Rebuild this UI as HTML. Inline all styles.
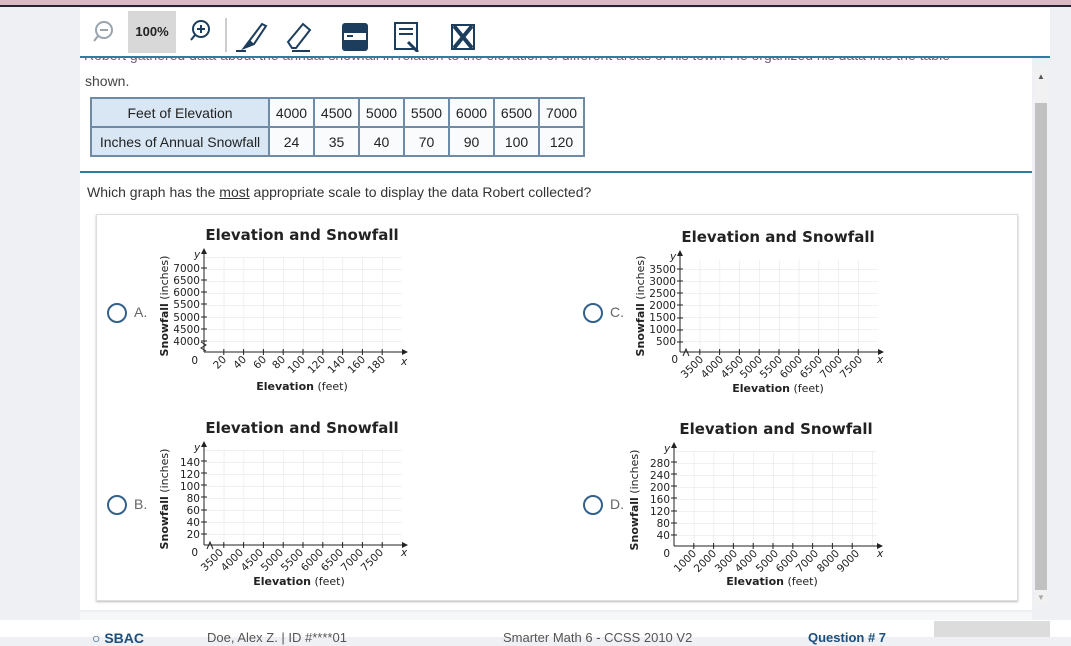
<!DOCTYPE html>
<html><head><meta charset="utf-8"><style>
body{margin:0;width:1071px;height:637px;overflow:hidden;background:#eef0f3;font-family:"Liberation Sans",sans-serif;position:relative}
.abs{position:absolute}
.tb{left:80px;top:8px;width:970px;height:48px;background:#fff}
.panel{left:80px;top:58px;width:952px;height:552px;background:#fff}
svg text{font-family:"DejaVu Sans","Liberation Sans",sans-serif}
table{border-collapse:collapse;font-size:14px;color:#222}
td{border:2px solid #6f8aa6;height:27px;text-align:center;padding:0;width:43px;background:#fafbfc}
td.h{background:#d9e7f5;width:176px}
.radio{width:16px;height:16px;border:2px solid #34608c;border-radius:50%}
.lbl{font-size:14px;color:#666}
</style></head><body>
<div class="abs" style="left:0;top:0;width:1071px;height:5px;background:#d9b7c3"></div>
<div class="abs" style="left:0;top:5px;width:1071px;height:2px;background:#223"></div>
<div class="abs tb">
 <svg class="abs" style="left:12px;top:10px" width="410" height="30">
  <circle cx="12" cy="12" r="8" fill="none" stroke="#9aa4ae" stroke-width="2"/><line x1="8" y1="12" x2="16" y2="12" stroke="#9aa4ae" stroke-width="2"/><line x1="6" y1="18" x2="2" y2="23" stroke="#9aa4ae" stroke-width="2"/>
 </svg>
 <div class="abs" style="left:48px;top:3px;width:48px;height:42px;background:#d8d8d8;font-size:13px;font-weight:bold;line-height:42px;text-align:center;color:#222">100%</div>
 <svg class="abs" style="left:108px;top:8px" width="300" height="36">
  <circle cx="13" cy="13" r="8" fill="none" stroke="#1d3d5c" stroke-width="2"/><line x1="9" y1="13" x2="17" y2="13" stroke="#1d3d5c" stroke-width="2"/><line x1="13" y1="9" x2="13" y2="17" stroke="#1d3d5c" stroke-width="2"/><line x1="7" y1="19" x2="3" y2="24" stroke="#1d3d5c" stroke-width="2"/>
  <line x1="38" y1="2" x2="38" y2="44" stroke="#ccc" stroke-width="2"/>
  <path d="M56 32 L62 24 L74 8 L78 10 L66 28 Z" fill="none" stroke="#1d3d5c" stroke-width="2"/><path d="M56 32 L62 24 L66 28Z" fill="#1d3d5c"/><line x1="48" y1="35" x2="58" y2="35" stroke="#1d3d5c" stroke-width="2"/>
  <path d="M100 26 L115 8 L122 14 L108 32 L104 32 Z" fill="none" stroke="#1d3d5c" stroke-width="2"/><line x1="104" y1="35" x2="122" y2="35" stroke="#1d3d5c" stroke-width="2"/>
  <rect x="154" y="7" width="26" height="28" rx="3" fill="#1d3d5c"/><rect x="156" y="17" width="22" height="7" fill="#fff"/><line x1="159" y1="20" x2="165" y2="20" stroke="#1d3d5c" stroke-width="2"/>
  <rect x="207" y="7" width="22" height="26" fill="none" stroke="#1d3d5c" stroke-width="2"/><line x1="211" y1="13" x2="225" y2="13" stroke="#1d3d5c" stroke-width="2"/><line x1="211" y1="18" x2="225" y2="18" stroke="#1d3d5c" stroke-width="2"/><path d="M220 26 L230 36" stroke="#1d3d5c" stroke-width="3"/>
  <path d="M266 10 L284 32 M284 10 L266 32" stroke="#1d3d5c" stroke-width="4"/><rect x="264" y="9" width="22" height="24" fill="none" stroke="#1d3d5c" stroke-width="2"/>
 </svg>
</div>
<div class="abs" style="left:80px;top:56px;width:970px;height:2px;background:#2a7e9e"></div>
<div class="abs panel">
 <div class="abs" style="left:4px;top:0;width:946px;height:7px;overflow:hidden"><div style="font-size:14px;color:#666;margin-top:-11px">Robert gathered data about the annual snowfall in relation to the elevation of different areas of his town. He organized his data into the table</div></div>
 <div class="abs" style="left:5px;top:15px;font-size:14px;color:#444">shown.</div>
 <table class="abs" style="left:10px;top:39px">
  <tr><td class="h">Feet of Elevation</td><td>4000</td><td>4500</td><td>5000</td><td>5500</td><td>6000</td><td>6500</td><td>7000</td></tr>
  <tr><td class="h">Inches of Annual Snowfall</td><td>24</td><td>35</td><td>40</td><td>70</td><td>90</td><td>100</td><td>120</td></tr>
 </table>
 <div class="abs" style="left:0;top:113px;width:952px;height:2px;background:#2a7e9e"></div>
 <div class="abs" style="left:7px;top:126px;font-size:14px;color:#333">Which graph has the <u>most</u> appropriate scale to display the data Robert collected?</div>
 <div class="abs" style="left:16px;top:156px;width:920px;height:385px;border:1px solid #ddd;box-shadow:0 1px 2px #bbb"></div>
</div>
<div class="abs" style="left:1034px;top:68px;width:14px;height:537px;background:#f1f1f1"></div>
<div class="abs" style="left:1035px;top:103px;width:12px;height:487px;background:#c1c1c1"></div>
<div class="abs" style="left:1037px;top:72px;font-size:8px;color:#555">▲</div>
<div class="abs" style="left:1037px;top:593px;font-size:8px;color:#aaa">▼</div>

<div class="abs radio" style="left:107px;top:303px"></div><div class="abs lbl" style="left:134px;top:304px">A.</div>
<div class="abs radio" style="left:107px;top:495px"></div><div class="abs lbl" style="left:134px;top:496px">B.</div>
<div class="abs radio" style="left:583px;top:303px"></div><div class="abs lbl" style="left:610px;top:304px">C.</div>
<div class="abs radio" style="left:583px;top:495px"></div><div class="abs lbl" style="left:610px;top:496px">D.</div>

<svg width="0" height="0" style="position:absolute"><defs><pattern id="g" x="60" y="35" width="19.8" height="12" patternUnits="userSpaceOnUse"><path d="M0 0 H19.8 M0 0 V12" stroke="#e2e2e2" fill="none"/></pattern>
<g id="xt"><path d="M79.8 127V133M99.6 127V133M119.4 127V133M139.2 127V133M159 127V133M178.8 127V133M198.6 127V133M218.4 127V133M238.2 127V133" stroke="#222"/></g>
<g id="yt"><path d="M57 46H63M57 58H63M57 70H63M57 82H63M57 95H63M57 107H63M57 119H63" stroke="#222"/></g></defs></svg>

<!-- A -->
<svg class="abs" style="left:144px;top:222px" width="280" height="175" font-size="10.5" fill="#222">
 <text x="158" y="18" font-size="15" font-weight="bold" text-anchor="middle">Elevation and Snowfall</text>
 <rect x="60" y="35" width="198" height="95" fill="url(#g)"/>
 <use href="#xt"/><use href="#yt"/>
 <line x1="60" y1="130" x2="60" y2="28" stroke="#222"/><path d="M57 32 L60 26 L63 32Z"/><text x="50" y="36" font-style="italic">y</text>
 <line x1="60" y1="130" x2="262" y2="130" stroke="#222"/><path d="M258 127 L264 130 L258 133Z"/><text x="257" y="143" font-style="italic">x</text>
 <path d="M57 120 L62 123 L57 126 L62 129" fill="none" stroke="#222"/>
 <text x="54" y="142" text-anchor="end">0</text>
 <g text-anchor="end"><text x="56" y="50">7000</text><text x="56" y="62">6500</text><text x="56" y="74">6000</text><text x="56" y="86">5500</text><text x="56" y="99">5000</text><text x="56" y="111">4500</text><text x="56" y="123">4000</text></g>
 <g text-anchor="end"><text transform="translate(83,138) rotate(-45)">20</text><text transform="translate(103,138) rotate(-45)">40</text><text transform="translate(123,138) rotate(-45)">60</text><text transform="translate(142,138) rotate(-45)">80</text><text transform="translate(162,138) rotate(-45)">100</text><text transform="translate(182,138) rotate(-45)">120</text><text transform="translate(202,138) rotate(-45)">140</text><text transform="translate(222,138) rotate(-45)">160</text><text transform="translate(242,138) rotate(-45)">180</text></g>
 <text x="158" y="168" text-anchor="middle" font-size="11"><tspan font-weight="bold">Elevation</tspan> (feet)</text>
 <text transform="translate(24,84) rotate(-90)" text-anchor="middle" font-size="11"><tspan font-weight="bold">Snowfall</tspan> (inches)</text>
</svg>
<!-- C -->
<svg class="abs" style="left:620px;top:222px" width="280" height="175" font-size="10.5" fill="#222">
 <text x="158" y="20" font-size="15" font-weight="bold" text-anchor="middle">Elevation and Snowfall</text>
 <rect x="60" y="38" width="198" height="92" fill="url(#g)"/>
 <use href="#xt"/><use href="#yt" y="1"/>
 <line x1="60" y1="130" x2="60" y2="30" stroke="#222"/><path d="M57 34 L60 28 L63 34Z"/><text x="50" y="38" font-style="italic">y</text>
 <line x1="60" y1="130" x2="262" y2="130" stroke="#222"/><path d="M258 127 L264 130 L258 133Z"/><text x="257" y="141" font-style="italic">x</text>
 <path d="M63 134 L66 127 L69 134" fill="none" stroke="#222"/>
 <text x="58" y="141" text-anchor="end">0</text>
 <g text-anchor="end"><text x="56" y="51">3500</text><text x="56" y="63">3000</text><text x="56" y="75">2500</text><text x="56" y="87">2000</text><text x="56" y="99">1500</text><text x="56" y="111">1000</text><text x="56" y="123">500</text></g>
 <g text-anchor="end"><text transform="translate(84,138) rotate(-45)">3500</text><text transform="translate(104,138) rotate(-45)">4000</text><text transform="translate(124,138) rotate(-45)">4500</text><text transform="translate(143,138) rotate(-45)">5000</text><text transform="translate(163,138) rotate(-45)">5500</text><text transform="translate(183,138) rotate(-45)">6000</text><text transform="translate(203,138) rotate(-45)">6500</text><text transform="translate(223,138) rotate(-45)">7000</text><text transform="translate(243,138) rotate(-45)">7500</text></g>
 <text x="158" y="170" text-anchor="middle" font-size="11"><tspan font-weight="bold">Elevation</tspan> (feet)</text>
 <text transform="translate(24,84) rotate(-90)" text-anchor="middle" font-size="11"><tspan font-weight="bold">Snowfall</tspan> (inches)</text>
</svg>
<!-- B -->
<svg class="abs" style="left:144px;top:415px" width="280" height="175" font-size="10.5" fill="#222">
 <text x="158" y="18" font-size="15" font-weight="bold" text-anchor="middle">Elevation and Snowfall</text>
 <rect x="60" y="35" width="198" height="95" fill="url(#g)"/>
 <use href="#xt"/><use href="#yt"/>
 <line x1="60" y1="130" x2="60" y2="28" stroke="#222"/><path d="M57 32 L60 26 L63 32Z"/><text x="50" y="36" font-style="italic">y</text>
 <line x1="60" y1="130" x2="262" y2="130" stroke="#222"/><path d="M258 127 L264 130 L258 133Z"/><text x="257" y="141" font-style="italic">x</text>
 <path d="M63 134 L66 127 L69 134" fill="none" stroke="#222"/>
 <text x="54" y="141" text-anchor="end">0</text>
 <g text-anchor="end"><text x="56" y="51">140</text><text x="56" y="63">120</text><text x="56" y="75">100</text><text x="56" y="87">80</text><text x="56" y="99">60</text><text x="56" y="111">40</text><text x="56" y="123">20</text></g>
 <g text-anchor="end"><text transform="translate(80,138) rotate(-45)">3500</text><text transform="translate(100,138) rotate(-45)">4000</text><text transform="translate(120,138) rotate(-45)">4500</text><text transform="translate(140,138) rotate(-45)">5000</text><text transform="translate(160,138) rotate(-45)">5500</text><text transform="translate(180,138) rotate(-45)">6000</text><text transform="translate(200,138) rotate(-45)">6500</text><text transform="translate(220,138) rotate(-45)">7000</text><text transform="translate(240,138) rotate(-45)">7500</text></g>
 <text x="155" y="170" text-anchor="middle" font-size="11"><tspan font-weight="bold">Elevation</tspan> (feet)</text>
 <text transform="translate(24,84) rotate(-90)" text-anchor="middle" font-size="11"><tspan font-weight="bold">Snowfall</tspan> (inches)</text>
</svg>
<!-- D -->
<svg class="abs" style="left:614px;top:416px" width="280" height="175" font-size="10.5" fill="#222">
 <text x="162" y="18" font-size="15" font-weight="bold" text-anchor="middle">Elevation and Snowfall</text>
 <rect x="60" y="35" width="203" height="95" fill="url(#g)"/>
 <use href="#xt"/><use href="#yt"/>
 <line x1="60" y1="130" x2="60" y2="28" stroke="#222"/><path d="M57 32 L60 26 L63 32Z"/><text x="50" y="36" font-style="italic">y</text>
 <line x1="60" y1="130" x2="267" y2="130" stroke="#222"/><path d="M263 127 L269 130 L263 133Z"/><text x="263" y="141" font-style="italic">x</text>
 <text x="56" y="141" text-anchor="end">0</text>
 <g text-anchor="end"><text x="56" y="51">280</text><text x="56" y="63">240</text><text x="56" y="75">200</text><text x="56" y="87">160</text><text x="56" y="99">120</text><text x="56" y="111">80</text><text x="56" y="123">40</text></g>
 <g text-anchor="end"><text transform="translate(83,138) rotate(-45)">1000</text><text transform="translate(103,138) rotate(-45)">2000</text><text transform="translate(124,138) rotate(-45)">3000</text><text transform="translate(144,138) rotate(-45)">4000</text><text transform="translate(165,138) rotate(-45)">5000</text><text transform="translate(185,138) rotate(-45)">6000</text><text transform="translate(205,138) rotate(-45)">7000</text><text transform="translate(226,138) rotate(-45)">8000</text><text transform="translate(246,138) rotate(-45)">9000</text></g>
 <text x="158" y="169" text-anchor="middle" font-size="11"><tspan font-weight="bold">Elevation</tspan> (feet)</text>
 <text transform="translate(24,84) rotate(-90)" text-anchor="middle" font-size="11"><tspan font-weight="bold">Snowfall</tspan> (inches)</text>
</svg>

<div class="abs" style="left:80px;top:612px;width:952px;height:8px;background:#f6f7f9"></div>
<div class="abs" style="left:0;top:620px;width:1071px;height:17px;background:#fff"></div>
<div class="abs" style="left:934px;top:621px;width:116px;height:16px;background:#dcdcdc"></div>
<div class="abs" style="left:92px;top:630px;font-size:14px;font-weight:bold;color:#1d4f7c">○ SBAC</div>
<div class="abs" style="left:207px;top:630px;font-size:13px;color:#555">Doe, Alex Z. | ID #****01</div>
<div class="abs" style="left:503px;top:630px;font-size:13px;color:#555">Smarter Math 6 - CCSS 2010 V2</div>
<div class="abs" style="left:808px;top:630px;font-size:13px;font-weight:bold;color:#1d4f7c">Question # 7</div>
</body></html>
